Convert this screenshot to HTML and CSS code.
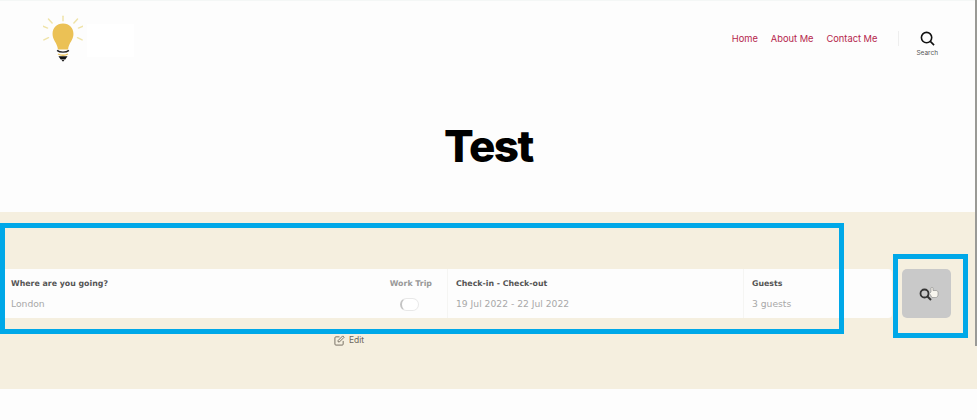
FILE: index.html
```html
<!DOCTYPE html>
<html lang="en">

<head>
    <meta charset="UTF-8">
    <meta name="viewport" content="width=device-width, initial-scale=1.0">
    <title>Test</title>
    <link rel="stylesheet" href="styles.css">
</head>

<body>
    <header class="site-header">
        <a class="logo" href="#" aria-label="Home">
            <svg class="logo-bulb" viewBox="0 0 44 52" width="40" height="48">
                <g stroke="#efe3a8" stroke-width="1.6" stroke-linecap="round">
                    <path d="M22 1v5" />
                    <path d="M6 4l4 4.500" />
                    <path d="M38 4l-4 4.500" />
                    <path d="M0 12l5 2" />
                    <path d="M44 12l-5 2" />
                    <path d="M1 27l5-2.500" />
                    <path d="M43 27l-5-2.500" />
                </g>
                <path d="M22 9c-7 0-11.500 5-11.500 11.500 0 6.500 5 9.500 6 17h11c1-7.500 6-10.500 6-17C33.500 14 29 9 22 9z" fill="#ebc155" />
                <path d="M15.500 38.500c3 2.500 10 2.500 13 0" fill="none" stroke="#222" stroke-width="1.500" />
                <path d="M16.500 42.500c3 1.500 8 1.500 11 0" fill="none" stroke="#ebc155" stroke-width="1.500" />
                <path d="M17 45h10l-2.500 3.500h-5z" fill="#111" />
                <path d="M20.500 49h3l-1.500 2z" fill="#111" />
            </svg>
            <span class="logo-card"></span>
        </a>
        <nav class="main-nav">
            <a href="#">Home</a>
            <a href="#">About Me</a>
            <a href="#">Contact Me</a>
        </nav>
        <button class="search-toggle">
            <svg viewBox="0 0 16 16" width="15" height="15">
                <circle cx="7" cy="7" r="5.500" fill="none" stroke="#111" stroke-width="1.700" />
                <path d="M11 11l4 4" stroke="#111" stroke-width="1.700" />
            </svg>
            <span>Search</span>
        </button>
    </header>

    <h1 class="page-title">Test</h1>

    <section class="booking-band">
        <form class="booking-bar">
            <div class="field field-place">
                <div class="place-col">
                    <label>Where are you going?</label>
                    <span class="value">London</span>
                </div>
                <div class="trip-col">
                    <label class="muted">Work Trip</label>
                    <span class="switch"></span>
                </div>
            </div>
            <div class="field field-dates">
                <label>Check-in - Check-out</label>
                <span class="value">19 Jul 2022 - 22 Jul 2022</span>
            </div>
            <div class="field field-guests">
                <label>Guests</label>
                <span class="value">3 guests</span>
            </div>
        </form>
        <div class="search-btn">
            <svg viewBox="0 0 20 14" width="20" height="14">
                <circle cx="5.500" cy="6.500" r="4" fill="none" stroke="#333" stroke-width="1.800" />
                <path d="M8.500 9.500l3.500 3.500" stroke="#333" stroke-width="2" />
                <path d="M10.500 6.500l1.500-1.500V1.200c0-1.200 2-1.200 2 0V3.500h3c1.200 0 2 .8 2 2V8c0 1.500-1 2.500-2.500 2.500h-3.500z" fill="#f7f5ee" stroke="#777" stroke-width=".5" />
            </svg>
        </div>
        <a class="edit-link" href="#">
            <svg viewBox="0 0 12 12" width="11" height="11">
                <path d="M6 2H2a1 1 0 0 0-1 1v7a1 1 0 0 0 1 1h7a1 1 0 0 0 1-1V6.500" fill="none" stroke="#6d675c" stroke-width="1" />
                <path d="M4.500 7.500V6L9.500 1 11 2.500l-5 5z" fill="none" stroke="#6d675c" stroke-width="1" />
            </svg>
            Edit
        </a>
    </section>

    <div class="mark mark-form"></div>
    <div class="mark mark-btn"></div>
    <div class="scroll-thumb"></div>
</body>

</html>
```

FILE: styles.css
```css
html,
body {
    margin: 0;
    padding: 0;
    height: 420px;
    overflow: hidden;
    background-color: #fdfdfd;
    font-family: "Inter", "Liberation Sans", sans-serif;
}

.site-header {
    height: 62px;
    padding: 14px 39px 0 43px;
    display: flex;
    align-items: flex-start;
    border-top: 1px solid #f4f7f6;
}

.logo {
    display: flex;
    align-items: flex-start;
    flex-grow: 1;
}

.logo-bulb {
    display: block;
}

.logo-card {
    width: 47px;
    height: 33px;
    margin: 9px 0 0 4px;
    background-color: #fff;
}

.main-nav {
    display: flex;
    gap: 13px;
    margin-top: 16px;
    padding-right: 21px;
    height: 15px;
}

.main-nav a {
    font-size: 9.300px;
    line-height: 15px;
    color: #b5264c;
    text-decoration: none;
}

.search-toggle {
    background: none;
    border: none;
    border-left: 1px solid #eeeeee;
    margin-top: 16px;
    padding: 0 0 0 17px;
    display: flex;
    flex-direction: column;
    align-items: center;
    gap: 3px;
    height: 15px;
    font-family: inherit;
}

.search-toggle svg {
    flex-shrink: 0;
}

.search-toggle span {
    font-size: 6.500px;
    color: #555;
}

.page-title {
    margin: 0;
    height: 135px;
    padding-top: 24px;
    box-sizing: border-box;
    text-align: center;
    font-size: 44px;
    line-height: 90px;
    font-weight: 800;
    letter-spacing: -1.500px;
    color: #000;
}

.booking-band {
    height: 177px;
    padding: 57px 26px 0 0;
    box-sizing: border-box;
    background-color: #f5efdf;
    display: grid;
    grid-template-columns: 892px 49px;
    column-gap: 10px;
    grid-template-rows: 49px auto;
    font-family: "DejaVu Sans", sans-serif;
}

.booking-bar {
    display: flex;
    background-color: #fdfdfd;
    border-radius: 0 4px 4px 0;
    font-size: 7.850px;
}

.field {
    box-sizing: border-box;
    padding-top: 9px;
    display: flex;
    flex-direction: column;
    gap: 9px;
    border-right: 1px solid #f5f5f3;
}

.field label {
    font-weight: 700;
    line-height: 11px;
    color: #555;
}

.field label.muted {
    color: #999;
}

.value {
    font-size: 9.200px;
    line-height: 12px;
    color: #a8a8a8;
}

.field-place {
    width: 448px;
    padding: 9px 15px 0 11px;
    flex-direction: row;
    justify-content: space-between;
}

.place-col,
.trip-col {
    display: flex;
    flex-direction: column;
    gap: 9px;
}

.trip-col {
    align-items: center;
}

.switch {
    width: 19px;
    height: 13px;
    margin-right: 2px;
    box-sizing: border-box;
    border: 1px solid #e8e8e8;
    border-left: 2px solid #c4c4c4;
    border-radius: 7px;
    background-color: #fff;
}

.field-dates {
    width: 296px;
    padding-left: 8px;
}

.field-guests {
    flex-grow: 1;
    padding-left: 8px;
    border-right: none;
}

.search-btn {
    background-color: #c9c9c9;
    border-radius: 5px;
    display: flex;
    align-items: center;
    justify-content: center;
    padding-left: 5px;
    box-sizing: border-box;
}

.edit-link {
    grid-column: 1;
    margin: 16px 0 0 334px;
    display: flex;
    align-items: center;
    gap: 4px;
    height: 12px;
    font-family: "Inter", sans-serif;
    font-size: 8.500px;
    color: #6d675c;
    text-decoration: none;
}

/* annotation boxes drawn over the screenshot */
.mark {
    position: absolute;
    box-sizing: border-box;
    border: 5px solid #00a8e8;
}

.mark-form {
    left: 0;
    top: 223px;
    width: 844px;
    height: 111px;
}

.mark-btn {
    left: 893px;
    top: 254px;
    width: 75px;
    height: 84px;
}

.scroll-thumb {
    position: absolute;
    right: 0;
    top: 0;
    width: 2px;
    height: 346px;
    background-color: #9a9a96;
}
```
